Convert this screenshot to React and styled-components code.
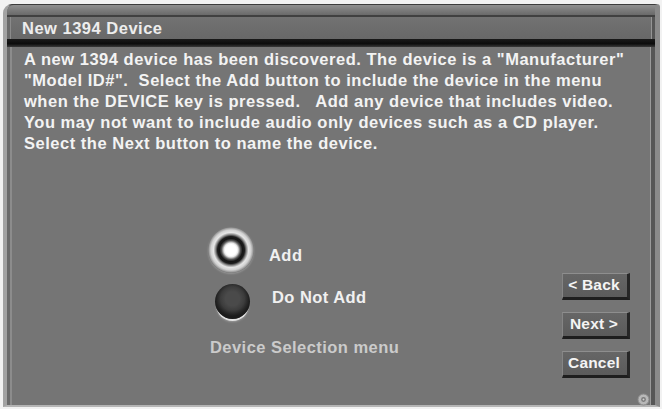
import React, { useState } from "react";
import styled, { createGlobalStyle } from "styled-components";

const Global = createGlobalStyle`
  html, body { margin: 0; padding: 0; background: #f2f2f2; }
  body { font-family: "Liberation Sans", Arial, sans-serif; }
`;

const Window = styled.div`
  box-sizing: border-box;
  position: relative;
  margin: 4px 0 0 3px;
  width: 657px;
  height: 403px;
  display: flex;
  flex-direction: column;
  background: #757575;
  border-top: 1px solid #3c3c3c;
  border-left: 4px solid #a2a2a2;
  border-right: 5px solid #8a8a8a;
  border-bottom: 2px solid #b4b4b4;
  border-radius: 9px 3px 0 0;
  box-shadow: inset 3px 0 0 #6a6a6a, inset 5px 0 0 #8c8c8c, inset -4px 0 0 #565656,
    inset -5px 0 0 #9a9a9a;
`;

const Bevel = styled.div`
  height: 10px;
  background: linear-gradient(#909090, #7a7a7a 55%, #6a6a6a);
  border-bottom: 2px solid #404040;
  border-radius: 7px 0 0 0;
`;

const TitleBar = styled.div`
  height: 22px;
  display: flex;
  align-items: center;
  padding: 1px 0 0 11px;
  box-sizing: border-box;
  margin: 0 3px 0 3px;
  background: linear-gradient(#727272, #686868);
  border-left: 1px solid #8a8a8a;
  border-right: 1px solid #959595;
  color: #ededed;
  font-weight: bold;
  font-size: 16.5px;
  letter-spacing: 0.5px;
`;

const Divider = styled.div`
  height: 8px;
  background: linear-gradient(#1a1a1a, #0c0c0c 60%, #3a3a3a);
`;

const Body = styled.div`
  flex: 1;
  display: flex;
  flex-direction: column;
  padding: 2px 0 0 17px;
`;

const Message = styled.p`
  margin: 0;
  color: #f3f3f3;
  font-weight: bold;
  font-size: 16.5px;
  line-height: 21px;
  letter-spacing: 0.52px;
  white-space: nowrap;
`;

const Lower = styled.div`
  flex: 1;
  display: flex;
`;

const Choices = styled.div`
  flex: 1;
  display: flex;
  flex-direction: column;
  align-items: flex-start;
  padding: 73px 0 0 184px;
`;

const Choice = styled.button`
  display: flex;
  align-items: center;
  gap: ${(p) => p.$gap}px;
  background: none;
  border: none;
  padding: 0;
  margin: ${(p) => p.$top}px 0 0 ${(p) => p.$indent}px;
  color: #f0f0f0;
  font: bold 16.5px "Liberation Sans", Arial, sans-serif;
  letter-spacing: 0.45px;
  cursor: pointer;
`;

const Label = styled.span`
  position: relative;
  top: ${(p) => p.$shift}px;
`;

const Dot = styled.span`
  box-sizing: border-box;
  width: ${(p) => p.$size}px;
  height: ${(p) => p.$size}px;
  border-radius: 50%;
  flex: none;
  background: ${(p) =>
    p.$on
      ? "radial-gradient(circle at 50% 50%, #ffffff 0 5.5px, #e8e8e8 7px, #555 9.5px, #161616 11.5px, #1c1c1c 13.5px, #8a8a8a 15.5px, #e6e6e6 17.5px, #d2d2d2 20px, #9c9c9c 22px, rgba(117,117,117,0) 23px)"
      : "radial-gradient(circle at 50% 42%, #4a4a4a 0 7px, #3c3c3c 12px, #262626 15.5px, #1c1c1c 17.5px)"};
  box-shadow: ${(p) =>
    p.$on
      ? "0 1px 2px rgba(255,255,255,0.25)"
      : "0 3px 0 -1px #e4e4e4, 0 4px 2px -1px #9a9a9a"};
`;

const Caption = styled.div`
  margin: 19px 0 0 2px;
  color: #cbcbcb;
  font-weight: bold;
  font-size: 16.5px;
  line-height: 18px;
  letter-spacing: 0.45px;
`;

const Buttons = styled.div`
  display: flex;
  flex-direction: column;
  gap: 12px;
  padding: 119px 0 0;
  margin-right: 25px;
`;

const NavButton = styled.button`
  box-sizing: border-box;
  width: 68px;
  height: 27px;
  padding: 0 2px 1px 0;
  background: linear-gradient(#666, #5b5b5b);
  color: #f4f4f4;
  font: bold 15.5px "Liberation Sans", Arial, sans-serif;
  letter-spacing: 0.2px;
  border: none;
  border-top: 1px solid #8e8e8e;
  border-left: 1px solid #858585;
  border-right: 3px solid #262626;
  border-bottom: 3px solid #1e1e1e;
  cursor: pointer;
`;

const Corner = styled.svg`
  position: absolute;
  right: 5px;
  bottom: -1px;
`;

export default function App() {
  const [add, setAdd] = useState(true);
  return (
    <>
      <Global />
      <Window>
        <Bevel />
        <TitleBar>New 1394 Device</TitleBar>
        <Divider />
        <Body>
          <Message>
            A new 1394 device has been discovered. The device is a "Manufacturer"
            <br />
            "Model ID#". &nbsp;Select the Add button to include the device in the menu
            <br />
            when the DEVICE key is pressed. &nbsp; Add any device that includes video.
            <br />
            You may not want to include audio only devices such as a CD player.
            <br />
            Select the Next button to name the device.
          </Message>
          <Lower>
            <Choices>
              <Choice $gap={15} $indent={0} $top={0} onClick={() => setAdd(true)}>
                <Dot $size={46} $on={add} />
                <Label $shift={5.5}>Add</Label>
              </Choice>
              <Choice $gap={22} $indent={7} $top={11} onClick={() => setAdd(false)}>
                <Dot $size={35} $on={!add} />
                <Label $shift={-4}>Do Not Add</Label>
              </Choice>
              <Caption>Device Selection menu</Caption>
            </Choices>
            <Buttons>
              <NavButton>&lt; Back</NavButton>
              <NavButton>Next &gt;</NavButton>
              <NavButton>Cancel</NavButton>
            </Buttons>
          </Lower>
        </Body>
        <Corner width="13" height="13" viewBox="0 0 13 13">
          <circle cx="6.5" cy="6.5" r="5.5" fill="#b8b8b8" stroke="#8c8c8c" />
          <circle cx="6.5" cy="6.5" r="2.4" fill="#7a7a7a" />
          <circle cx="6.5" cy="6.5" r="1" fill="#cfcfcf" />
        </Corner>
      </Window>
    </>
  );
}
